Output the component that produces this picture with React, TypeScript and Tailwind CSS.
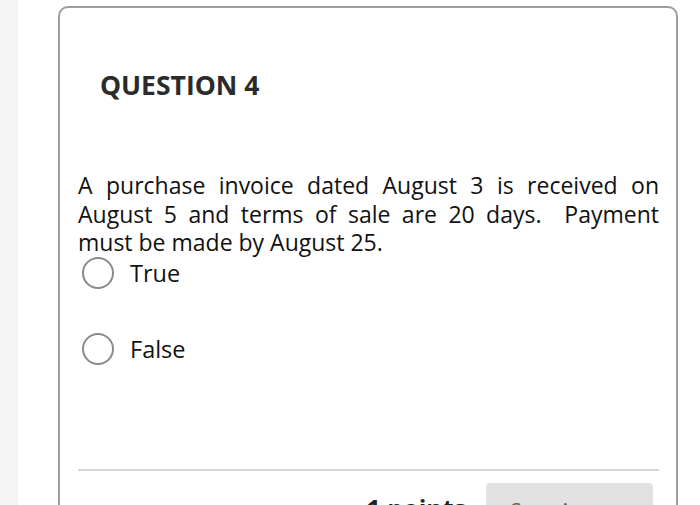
import { useState } from "react";

const options = ["True", "False"];

export default function App() {
  const [choice, setChoice] = useState<string | null>(null);

  return (
    <div className="flex h-[505px] overflow-hidden bg-white font-['Open_Sans',sans-serif] text-[#222]">
      <div className="w-[18px] shrink-0 bg-[#f5f5f5]" />
      <div className="flex-1 pl-[40px] pr-[22px] pt-[6px]">
        <section className="rounded-[10px] border-2 border-[#9c9c9c] pl-[18px] pr-[17px] pt-[59px]">
          <h2 className="pl-[22px] text-[26.5px] font-bold leading-[36px] text-[#2b2b2b]">QUESTION 4</h2>

          <p className="mt-[68px] text-justify text-[23px] leading-[28.5px] text-[#111]">
            A purchase invoice dated August 3 is received on August 5 and terms of sale are 20 days.&nbsp; Payment must be made by August 25.
          </p>

          <div className="flex flex-col gap-[44px]">
            {options.map((opt) => (
              <label key={opt} className="flex cursor-pointer items-center gap-[16px] pl-[4px]">
                <button
                  onClick={() => setChoice(opt)}
                  className="flex h-[32px] w-[32px] items-center justify-center rounded-full border-[2.5px] border-[#8a8a8a]"
                >
                  {choice === opt && <span className="h-[14px] w-[14px] rounded-full bg-[#555]" />}
                </button>
                <span className="text-[23.5px] leading-[32px] text-[#111]">{opt}</span>
              </label>
            ))}
          </div>

          <hr className="mt-[104px] border-t-2 border-[#d6d6d6]" />

          <div className="flex items-start justify-end gap-[20px] pr-[6px] pt-[12px]">
            <span className="pt-[10px] text-[25px] font-bold leading-[30px] text-[#222]">1 points</span>
            <button className="h-[44px] w-[167px] rounded-t-[4px] bg-[#e2e2e2] pt-[10px] text-[20px] leading-[26px] text-[#666]">
              Save Answer
            </button>
          </div>
        </section>
      </div>
    </div>
  );
}
